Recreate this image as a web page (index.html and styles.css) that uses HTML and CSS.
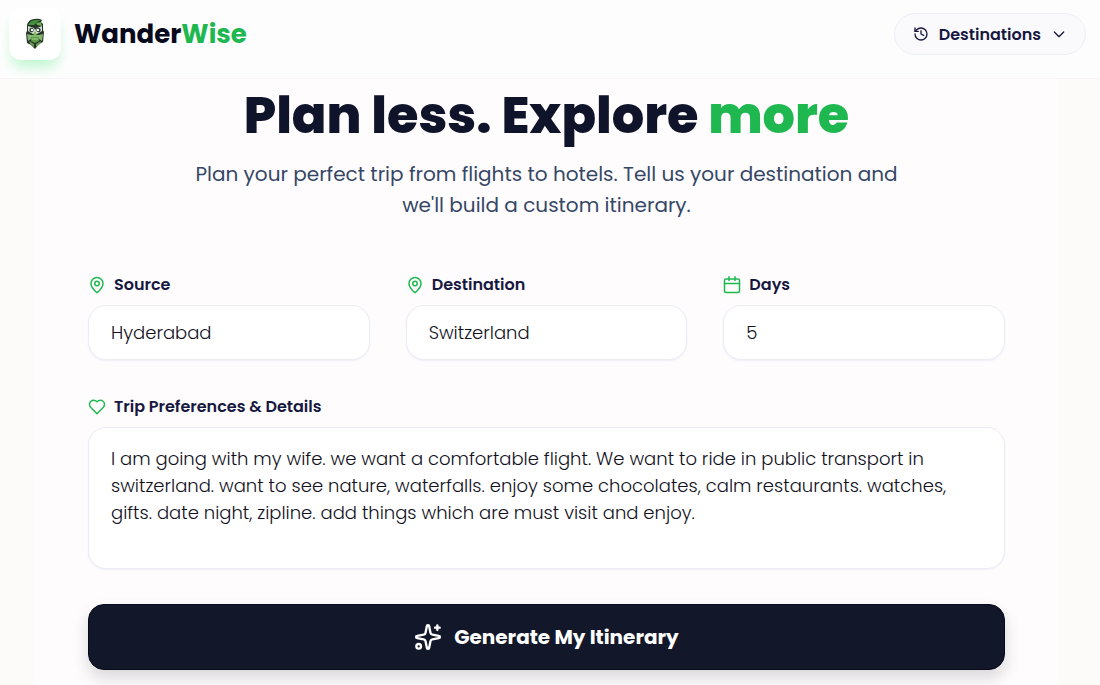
FILE: index.html
```html
<!DOCTYPE html>
<html lang="en">
<head>
<meta charset="utf-8">
<meta name="viewport" content="width=device-width, initial-scale=1">
<title>WanderWise</title>
<link rel="stylesheet" href="styles.css">
</head>
<body>
<header class="topbar">
  <a class="brand" href="#">
    <span class="brand-tile">
      <svg class="brand-logo" viewBox="0 0 20 32" aria-hidden="true">
        <path d="M2 7Q3 2 9 1Q14 0 17 2L16 4L18 6L18 12L19 14L18 24L14 26L10 31L6 27L2 25L1 15L2 13Z" fill="#253528"/>
        <path d="M3 7Q5 3 10 2L16 2Q11 4 9 7Z" fill="#43913a"/>
        <path d="M11 5L16 4L17 8L12 7Z" fill="#69ad51"/>
        <path d="M3 8L9 10L10 12L12 10L17 8L17 13L12 16H8L3 13Z" fill="#d5dfd2"/>
        <circle cx="6.500" cy="12" r="2.200" fill="#29382b"/><circle cx="13.500" cy="12" r="2.200" fill="#29382b"/>
        <circle cx="7" cy="12" r="1.200" fill="#fff"/><circle cx="13" cy="12" r="1.200" fill="#fff"/>
        <path d="M10 13L12 16L10 18L8 16Z" fill="#7fba61"/>
        <path d="M2 16L6 17V21L3 23ZM18 16L14 17V21L17 23Z" fill="#86b276"/>
        <path d="M6 17H14V23L10 25L6 23Z" fill="#5c9c47"/>
        <path d="M5 18H15M7 21H13" stroke="#a7cf8c"/>
        <path d="M4 23L9 26V29L5 26ZM16 23L11 26V29L15 26Z" fill="#6b9854"/>
      </svg>
    </span>
    <span class="brand-name">Wander<span class="accent">Wise</span></span>
  </a>
  <button class="menu-button" type="button">
    <svg class="icon icon-small" viewBox="0 0 24 24" aria-hidden="true"><path d="M3 12a9 9 0 1 0 9-9 9.750 9.750 0 0 0-6.740 2.740L3 8"/><path d="M3 3v5h5M12 7v5l4 2"/></svg>
    <span>Destinations</span>
    <svg class="icon icon-small" viewBox="0 0 24 24" aria-hidden="true"><path d="m5 9 7 7 7-7"/></svg>
  </button>
</header>
<main class="page">
  <section class="planner">
    <h1 class="title">Plan less. Explore <span class="accent">more</span></h1>
    <p class="subtitle">Plan your perfect trip from flights to hotels. Tell us your destination and we'll build a custom itinerary.</p>
    <form class="trip-form">
      <div class="fields">
        <div class="field">
          <label class="label" for="source"><svg class="icon accent" viewBox="0 0 24 24" aria-hidden="true"><path d="M20 10c0 5-5.540 10.190-7.400 11.800a1 1 0 0 1-1.200 0C9.540 20.190 4 15 4 10a8 8 0 0 1 16 0"/><circle cx="12" cy="10" r="3"/></svg>Source</label>
          <input class="control" id="source" type="text" value="Hyderabad">
        </div>
        <div class="field">
          <label class="label" for="destination"><svg class="icon accent" viewBox="0 0 24 24" aria-hidden="true"><path d="M20 10c0 5-5.540 10.190-7.400 11.800a1 1 0 0 1-1.200 0C9.540 20.190 4 15 4 10a8 8 0 0 1 16 0"/><circle cx="12" cy="10" r="3"/></svg>Destination</label>
          <input class="control" id="destination" type="text" value="Switzerland">
        </div>
        <div class="field">
          <label class="label" for="days"><svg class="icon accent" viewBox="0 0 24 24" aria-hidden="true"><path d="M8 1v5M16 1v5M2 10h20"/><rect x="2" y="4" width="20" height="18" rx="2"/></svg>Days</label>
          <input class="control" id="days" type="text" inputmode="numeric" value="5">
        </div>
      </div>
      <div class="field">
        <label class="label" for="details"><svg class="icon accent" viewBox="0 0 24 24" aria-hidden="true"><path d="M19 14c1.490-1.460 3-3.210 3-5.500A5.500 5.500 0 0 0 16.500 3c-1.760 0-3 .5-4.500 2-1.500-1.500-2.740-2-4.500-2A5.500 5.500 0 0 0 2 8.500c0 2.300 1.500 4.050 3 5.500l7 7Z"/></svg>Trip Preferences &amp; Details</label>
        <textarea class="control details" id="details" rows="4">I am going with my wife. we want a comfortable flight. We want to ride in public transport in switzerland. want to see nature, waterfalls. enjoy some chocolates, calm restaurants. watches, gifts. date night, zipline. add things which are must visit and enjoy.</textarea>
      </div>
      <button class="submit" type="submit">
        <svg class="icon icon-large" viewBox="0 0 24 24" aria-hidden="true"><path d="M11 2.800a1 1 0 0 1 2 0l1.100 5.500a2 2 0 0 0 1.600 1.600l5.500 1.100a1 1 0 0 1 0 2l-5.500 1.100a2 2 0 0 0-1.600 1.600L13 21.200a1 1 0 0 1-2 0l-1.100-5.500a2 2 0 0 0-1.600-1.600L2.800 13a1 1 0 0 1 0-2l5.500-1.100a2 2 0 0 0 1.600-1.600Z"/><path d="M20 2v4M22 4h-4"/><circle cx="4" cy="20" r="2"/></svg>
        Generate My Itinerary
      </button>
    </form>
  </section>
</main>
</body>
</html>
```
FILE: styles.css
```css
* { box-sizing: border-box; }
body {
  margin: 0;
  min-height: 100vh;
  overflow: hidden;
  background: #fdfbf9;
  color: #10142a;
  font-family: Poppins, Inter, "Open Sans", sans-serif;
}
button, input, textarea { font: inherit; color: inherit; }
.accent { color: #1fb850; }
.icon {
  width: 18px;
  height: 18px;
  flex: none;
  fill: none;
  stroke: currentColor;
  stroke-width: 2;
  stroke-linecap: round;
  stroke-linejoin: round;
}
.icon-small { width: 16px; height: 16px; }
.icon-large { width: 28px; height: 28px; }
.topbar {
  display: flex;
  align-items: center;
  justify-content: space-between;
  height: 79px;
  padding: 0 14px 10px 9px;
  background: #fefdfe;
  border-bottom: 1px solid #f7f5f8;
}
.brand { display: flex; align-items: center; gap: 13px; color: #08091c; text-decoration: none; }
.brand-tile {
  display: grid;
  place-items: center;
  width: 52px;
  height: 52px;
  border-radius: 12px;
  background: #fff;
  box-shadow: 0 10px 14px -3px #bdf6cf;
}
.brand-logo { width: 20px; height: 32px; }
.brand-name { font-size: 26px; font-weight: 700; line-height: 36px; }
.menu-button {
  display: flex;
  align-items: center;
  gap: 10px;
  height: 42px;
  padding: 0 18px;
  border: 1px solid #edf0f8;
  border-radius: 21px;
  background: #fafafd;
  color: #17183f;
  font-size: 16px;
  font-weight: 600;
}
.page { padding: 0 42px 0 35px; }
.planner { padding: 4px 53px 36px; background: #fefcfd; }
.title {
  margin: 0;
  text-align: center;
  font-size: 51px;
  font-weight: 800;
  line-height: 64px;
}
.subtitle {
  max-width: 730px;
  margin: 12px auto 52px;
  color: #354766;
  text-align: center;
  font-size: 20px;
  line-height: 31px;
}
.trip-form { display: grid; gap: 35px; }
.fields { display: grid; grid-template-columns: repeat(3, 1fr); gap: 36px; }
.field { display: grid; gap: 8px; min-width: 0; }
.label {
  display: flex;
  align-items: center;
  gap: 8px;
  color: #17183f;
  font-size: 16px;
  font-weight: 600;
  line-height: 24px;
}
.control {
  display: block;
  width: 100%;
  height: 55px;
  padding: 0 22px;
  border: 1px solid #ececf5;
  border-radius: 18px;
  outline: none;
  background: #fff;
  box-shadow: 0 1px 2px #f0eff5;
  color: #111122;
  font-size: 18px;
  font-weight: 300;
}
.details { height: 142px; padding-top: 17px; line-height: 27px; resize: none; }
.submit {
  display: flex;
  align-items: center;
  justify-content: center;
  gap: 12px;
  width: 100%;
  height: 66px;
  border: 1px solid #080b1b;
  border-radius: 16px;
  background: #12172a;
  box-shadow: 0 8px 16px #d9d7d9;
  color: #fff;
  font-size: 20px;
  font-weight: 700;
}
```
